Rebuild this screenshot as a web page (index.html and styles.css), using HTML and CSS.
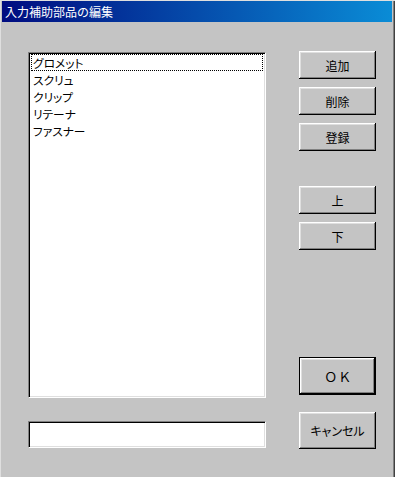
FILE: index.html
```html
<!DOCTYPE html>
<html lang="ja">
<head>
  <meta charset="UTF-8" />
  <title>入力補助部品の編集</title>
  <link rel="stylesheet" href="styles.css">
</head>
<body>
  <div class="window">
    <div class="titlebar">入力補助部品の編集</div>

    <div class="content">
      <div class="left">
        <div class="listbox">
          <div class="item focused">グロメット</div>
          <div class="item">スクリュ</div>
          <div class="item">クリップ</div>
          <div class="item">リテーナ</div>
          <div class="item">ファスナー</div>
        </div>
        <div class="textbox"></div>
      </div>

      <div class="right">
        <button class="btn">追加</button>
        <button class="btn">削除</button>
        <button class="btn">登録</button>
        <button class="btn up">上</button>
        <button class="btn">下</button>
        <button class="btn ok">Ｏ Ｋ</button>
        <button class="btn cancel">キャンセル</button>
      </div>
    </div>
  </div>
</body>
</html>
```

FILE: styles.css
```css
body {
  margin: 0;
  padding: 0;
  font-family: "Noto Sans CJK JP", "Noto Sans", sans-serif;
  background: #c0c0c0;
  overflow: hidden;
}

.window {
  width: 395px;
  height: 477px;
  box-sizing: border-box;
  padding: 1px 3px 0 2px;
  background: #c4c4c4;
  box-shadow: inset 1px 1px #dfdfdf, inset -1px 0 #404040, inset -2px 0 #808080;
}

.titlebar {
  height: 21px;
  line-height: 21px;
  padding-left: 3px;
  color: #fff;
  font-size: 12px;
  background: linear-gradient(to right, #000c80, #0a8cd6);
  white-space: nowrap;
}

.content {
  display: flex;
  padding: 29px 0 0 26px;
}

.left {
  width: 238px;
  margin-top: 1px;
}

.listbox,
.textbox {
  box-sizing: border-box;
  background: #fff;
  border: 1px solid;
  border-color: #808080 #fff #fff #808080;
  box-shadow: inset 1px 1px #000, inset -1px -1px #dfdfdf;
}

.listbox {
  height: 346px;
  padding: 1px 2px;
}

.item {
  height: 17px;
  line-height: 17px;
  padding-left: 2px;
  font-size: 11.7px;
  font-feature-settings: "palt";
  color: #000;
  white-space: nowrap;
}

.item.focused {
  outline: 1px dotted #000;
  outline-offset: -1px;
}

.textbox {
  height: 27px;
  margin-top: 23px;
}

.right {
  display: flex;
  flex-direction: column;
  margin-left: 33px;
  width: 77px;
}

.btn {
  width: 77px;
  height: 28px;
  margin: 0 0 8px 0;
  padding: 0;
  border: none;
  background: #c4c4c4;
  color: #000;
  font-family: "Noto Sans CJK JP", "Noto Sans", sans-serif;
  font-size: 12px;
  font-feature-settings: "palt";
  box-shadow: inset -1px -1px #000, inset 1px 1px #fff, inset -2px -2px #808080, inset 2px 2px #dfdfdf;
}

.btn.up {
  margin-top: 27px;
}

.btn.ok {
  height: 38px;
  margin-top: 99px;
  margin-bottom: 17px;
  border: 1px solid #000;
  font-size: 13px;
}

.btn.cancel {
  height: 37px;
}
```
